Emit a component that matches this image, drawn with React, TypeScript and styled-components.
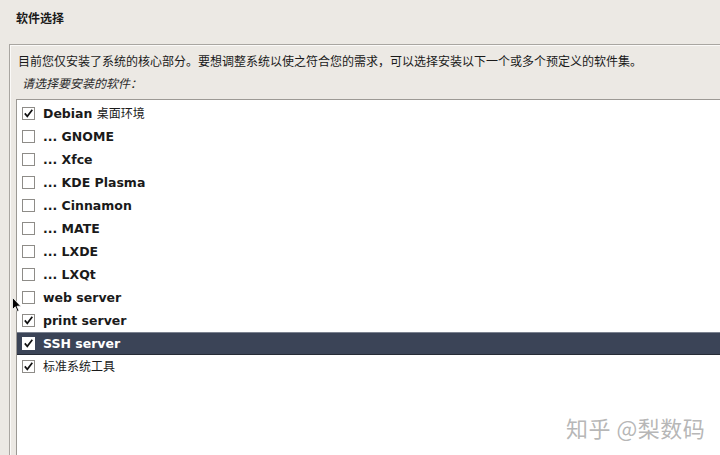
import React from "react";
import styled, { createGlobalStyle } from "styled-components";

const Global = createGlobalStyle`
  html, body { margin: 0; padding: 0; background: #ece9e4; overflow: hidden; }
  body { width: 720px; height: 455px; font-family: "DejaVu Sans", "Noto Sans CJK SC", sans-serif; }
`;

const Screen = styled.div`
  position: relative;
  width: 720px;
  height: 455px;
  overflow: hidden;
  background: #ece9e4;
  color: #1a1a1a;
`;

const Title = styled.div`
  height: 44px;
  box-sizing: border-box;
  padding: 12px 0 0 16px;
  font-size: 12px;
  font-weight: bold;
  line-height: 14px;
`;

const Panel = styled.div`
  margin-left: 9px;
  width: 760px;
  height: 420px;
  box-sizing: border-box;
  border-top: 1px solid #a9a6a1;
  border-left: 1px solid #a9a6a1;
  box-shadow: inset 1px 1px 0 #fbfaf8;
  padding: 8px 0 0 6px;
`;

const Description = styled.div`
  font-size: 12px;
  line-height: 15px;
  padding-left: 2px;
  white-space: nowrap;
  font-family: "Noto Sans CJK SC", "DejaVu Sans", sans-serif;
`;

const Prompt = styled.div`
  margin-top: 7px;
  padding-left: 6px;
  font-size: 12px;
  line-height: 15px;
  font-style: italic;
  color: #2a2a2a;
  font-family: "Noto Sans CJK SC", "DejaVu Sans", sans-serif;
`;

const ListBox = styled.div`
  margin-top: 9px;
  height: 400px;
  background: #ffffff;
  border-top: 1px solid #9c9994;
  border-left: 1px solid #9c9994;
  padding-top: 2px;
  display: flex;
  flex-direction: column;
`;

const Row = styled.div<{ $selected?: boolean }>`
  height: 23px;
  box-sizing: border-box;
  display: flex;
  align-items: center;
  gap: 8px;
  padding-left: 5px;
  background: ${(p) => (p.$selected ? "#3b4457" : "transparent")};
  border-top: 1px solid ${(p) => (p.$selected ? "#7b8290" : "transparent")};
  border-bottom: 1px solid ${(p) => (p.$selected ? "#262b36" : "transparent")};
  color: ${(p) => (p.$selected ? "#ffffff" : "#1a1a1a")};
`;

const Box = styled.span<{ $selected?: boolean }>`
  width: 13px;
  height: 13px;
  box-sizing: border-box;
  border: 1px solid ${(p) => (p.$selected ? "#ffffff" : "#8e8c88")};
  background: #ffffff;
  display: inline-flex;
  align-items: center;
  justify-content: center;
  flex-shrink: 0;
`;

const Label = styled.span<{ $cjk?: boolean }>`
  font-size: ${(p) => (p.$cjk ? "12px" : "12.5px")};
  font-weight: ${(p) => (p.$cjk ? "normal" : "bold")};
  font-family: "DejaVu Sans", "Noto Sans CJK SC", sans-serif;
  white-space: nowrap;
  line-height: 14px;
`;

const CjkPart = styled.span`
  font-weight: normal;
  font-size: 12px;
`;

const Watermark = styled.div`
  position: absolute;
  left: 566px;
  top: 411px;
  font-size: 22px;
  letter-spacing: 0.5px;
  color: rgba(170, 170, 170, 0.85);
  font-family: "Noto Sans CJK SC", sans-serif;
  text-shadow: 1px 1px 0 rgba(255,255,255,0.8);
`;

const Cursor = styled.svg`
  position: absolute;
  left: 12px;
  top: 297px;
`;

const Check = () => (
  <svg width="11" height="11" viewBox="0 0 11 11">
    <path d="M1.8 5.4 L4.3 8.3 L9.3 1.8" fill="none" stroke="#111" strokeWidth="1.7" />
  </svg>
);

type Item = { label: React.ReactNode; checked: boolean; selected?: boolean; cjk?: boolean };

const items: Item[] = [
  { label: <>Debian <CjkPart>桌面环境</CjkPart></>, checked: true },
  { label: "... GNOME", checked: false },
  { label: "... Xfce", checked: false },
  { label: "... KDE Plasma", checked: false },
  { label: "... Cinnamon", checked: false },
  { label: "... MATE", checked: false },
  { label: "... LXDE", checked: false },
  { label: "... LXQt", checked: false },
  { label: "web server", checked: false },
  { label: "print server", checked: true },
  { label: "SSH server", checked: true, selected: true },
  { label: "标准系统工具", checked: true, cjk: true },
];

export default function App() {
  return (
    <Screen>
      <Global />
      <Title>软件选择</Title>
      <Panel>
        <Description>
          目前您仅安装了系统的核心部分。要想调整系统以使之符合您的需求，可以选择安装以下一个或多个预定义的软件集。
        </Description>
        <Prompt>请选择要安装的软件：</Prompt>
        <ListBox>
          {items.map((it, i) => (
            <Row key={i} $selected={it.selected}>
              <Box $selected={it.selected}>{it.checked && <Check />}</Box>
              <Label $cjk={it.cjk}>{it.label}</Label>
            </Row>
          ))}
        </ListBox>
      </Panel>
      <Watermark>知乎 @梨数码</Watermark>
      <Cursor width="10" height="16" viewBox="0 0 10 16">
        <path d="M0.5 0.5 L0.5 12.5 L3.3 9.8 L5.3 14.5 L7 13.8 L5 9.2 L8.8 9.2 Z" fill="#000" stroke="#fff" strokeWidth="0.8" />
      </Cursor>
    </Screen>
  );
}
